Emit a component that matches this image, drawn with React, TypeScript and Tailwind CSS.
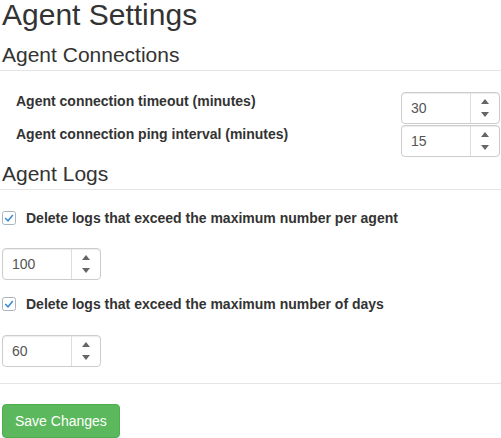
function Arrow({ down }: { down?: boolean }) {
  return (
    <svg width="8" height="5" viewBox="0 0 8 5">
      <path d={down ? "M0 0H8L4 5Z" : "M4 0L8 5H0Z"} fill="#666" />
    </svg>
  );
}

function NumberBox({ value, className = "" }: { value: string; className?: string }) {
  return (
    <div
      className={`flex h-[32px] w-[99px] rounded-[4px] border border-[#ccc] bg-white shadow-[inset_0_1px_1px_rgba(0,0,0,0.075)] ${className}`}
    >
      <div className="flex flex-1 items-center pl-[9px] text-[14px] text-[#555]">{value}</div>
      <div className="flex w-[29px] flex-col items-center justify-center gap-[8px] border-l border-[#ddd]">
        <Arrow />
        <Arrow down />
      </div>
    </div>
  );
}

function CheckRow({ label, className = "" }: { label: string; className?: string }) {
  return (
    <div className={`flex h-[20px] items-center gap-[10px] pl-[2px] ${className}`}>
      <svg width="14" height="14" viewBox="0 0 14 14">
        <rect x="0.5" y="0.5" width="13" height="13" rx="2" fill="#fff" stroke="#aab4be" />
        <path d="M3.2 7L6 9.8L10.8 4" fill="none" stroke="#3a8ad6" strokeWidth="1.5" />
      </svg>
      <span className="text-[14px] font-bold leading-5">{label}</span>
    </div>
  );
}

const connectionRows = [
  { label: "Agent connection timeout (minutes)", value: "30" },
  { label: "Agent connection ping interval (minutes)", value: "15" },
];

export default function App() {
  return (
    <div className="w-[501px] bg-white pt-px text-[#333] font-['Liberation_Sans',Arial,sans-serif]">
      <h1 className="-mt-[3px] pl-[2px] text-[30px] leading-[34px]">Agent Settings</h1>

      <h2 className="mt-[11px] border-b border-[#e5e5e5] pb-[3px] pl-[2px] text-[21px] leading-[24px]">
        Agent Connections
      </h2>

      <div className="mt-[20px] pr-px">
        {connectionRows.map((row) => (
          <div key={row.label} className="flex h-[33px] items-start justify-between">
            <label className="pl-[16px] text-[14px] font-bold leading-5">{row.label}</label>
            <NumberBox value={row.value} className="mt-px" />
          </div>
        ))}
      </div>

      <h2 className="mt-[5px] border-b border-[#e5e5e5] pb-[3px] pl-[2px] text-[21px] leading-[24px]">
        Agent Logs
      </h2>

      <CheckRow label="Delete logs that exceed the maximum number per agent" className="mt-[18px]" />
      <NumberBox value="100" className="ml-[2px] mt-[20px] w-[98px]" />

      <CheckRow label="Delete logs that exceed the maximum number of days" className="mt-[14px]" />
      <NumberBox value="60" className="ml-[2px] mt-[21px] w-[98px]" />

      <div className="mt-[16px] border-t border-[#e5e5e5]" />

      <button className="ml-[2px] mt-[20px] rounded-[4px] border border-[#4cae4c] bg-[#5cb85c] px-[12px] py-[6px] text-[14px] leading-5 text-white">
        Save Changes
      </button>
    </div>
  );
}
